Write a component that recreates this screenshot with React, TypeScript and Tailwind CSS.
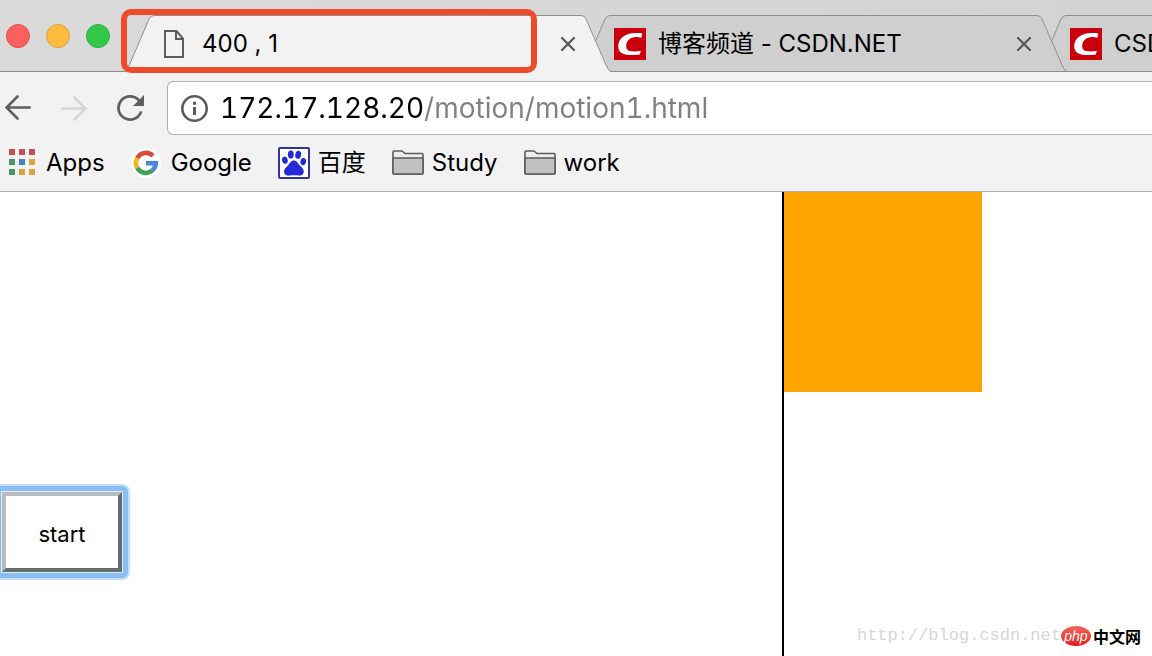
import React from "react";
import clsx from "clsx";

interface Tab {
  title: string;
  favicon: React.ReactNode;
  active?: boolean;
  layer: string;
}

interface Bookmark {
  label: string;
  icon: React.ReactNode;
}

const PageIcon = () => (
  <svg width="20" height="28" viewBox="0 0 20 28" fill="none" stroke="#5c5c5c" strokeWidth="2">
    <path d="M1 1H12.5L19 8.5V27H1Z" />
    <path d="M12 1V9H19" />
  </svg>
);

const CsdnIcon = () => (
  <svg width="32" height="32" viewBox="0 0 32 32">
    <rect width="32" height="32" fill="#c9000b" />
    <path
      fill="#fff"
      d="M28.3 5.3C24.5 4.8 21 4.8 18 5.2C10 6.2 4.3 11 4.2 18C4.2 24 8.2 26.7 15 27C19 27.2 22.5 27 25.8 26.5L26.8 22.7C23.5 23.4 20.5 23.6 17.5 23.3C13.6 22.9 12 21 12.2 17.8C12.5 12.6 16 9.6 20.6 9.2C23 9 25 9.1 27.4 9.7Z"
    />
  </svg>
);

const CloseIcon = () => (
  <svg width="16" height="16" viewBox="0 0 16 16" stroke="#555" strokeWidth="2.2" strokeLinecap="round">
    <path d="M2 2L14 14M14 2L2 14" />
  </svg>
);

const ArrowIcon = ({ flip, color }: { flip?: boolean; color: string }) => (
  <svg
    width="26"
    height="26"
    viewBox="0 0 26 26"
    fill="none"
    stroke={color}
    strokeWidth="2.6"
    strokeLinecap="round"
    className={clsx(flip && "rotate-180")}
  >
    <path d="M24.7 12.5H2M12.5 1.5L1.6 12.5L12.5 23.5" />
  </svg>
);

const ReloadIcon = () => (
  <svg width="27" height="26" viewBox="0 0 27 26" fill="none">
    <path d="M23.8 17.4A11.6 11.6 0 1 1 21.6 5" stroke="#5f5f5f" strokeWidth="2.7" strokeLinecap="round" />
    <path d="M27 0V11H16Z" fill="#5f5f5f" />
  </svg>
);

const InfoIcon = () => (
  <svg width="28" height="28" viewBox="0 0 28 28" fill="none">
    <circle cx="14.5" cy="14.5" r="12.2" stroke="#5c5c5c" strokeWidth="2.6" />
    <path d="M14.5 13V21M14.5 7.7V10.7" stroke="#5c5c5c" strokeWidth="3" />
  </svg>
);

const appColors = [
  "#c44f54",
  "#c44f54",
  "#c44f54",
  "#4a9466",
  "#3f86cf",
  "#d9a441",
  "#4a9466",
  "#d9a441",
  "#d9a441",
];

const AppsIcon = () => (
  <svg width="32" height="32" viewBox="0 0 32 32">
    {appColors.map((color, i) => (
      <rect key={i} x={3 + (i % 3) * 10} y={2 + Math.floor(i / 3) * 10} width="6" height="6" fill={color} />
    ))}
  </svg>
);

const GoogleIcon = () => (
  <svg width="32" height="32" viewBox="0 0 32 32" fill="none">
    <circle cx="15" cy="16" r="15" fill="#fff" />
    <g strokeWidth="4.6" transform="translate(-1)">
      <path d="M7.2 11.2A10 10 0 0 1 23 8.8" stroke="#d9483b" />
      <path d="M7.2 20.8A10 10 0 0 1 7.2 11.2" stroke="#f3b61f" />
      <path d="M22.4 23.6A10 10 0 0 1 7.2 20.8" stroke="#3da457" />
      <path d="M16 16.2H25.8A10 10 0 0 1 22.2 23.6" stroke="#4a86dc" />
    </g>
  </svg>
);

const BaiduIcon = () => (
  <svg width="32" height="32" viewBox="0 0 32 32">
    <rect x="1" y="1" width="30" height="30" rx="1" fill="#fff" stroke="#34349a" strokeWidth="2" />
    <g fill="#2529d8">
      <ellipse cx="12.8" cy="7.4" rx="2.9" ry="4" />
      <ellipse cx="20.2" cy="7.8" rx="2.9" ry="4" transform="rotate(12 20.2 7.8)" />
      <ellipse cx="6.9" cy="13.2" rx="2.8" ry="3.6" transform="rotate(-14 6.9 13.2)" />
      <ellipse cx="25.2" cy="14.6" rx="2.8" ry="3.6" transform="rotate(10 25.2 14.6)" />
      <path d="M15.8 13.6C18.6 13.6 19.6 16 21.4 18C23.4 20 25.8 21.6 25.8 24.6C25.8 27.4 23.6 29 20.8 28.6C17.6 28.1 14.4 28.1 11.4 28.6C8.2 29.1 6 27.4 6 24.6C6 21.6 8.4 20.2 10.2 18.2C12 16 13 13.6 15.8 13.6Z" />
    </g>
  </svg>
);

const FolderIcon = () => (
  <svg width="32" height="32" viewBox="0 0 32 32" stroke="#5c5c5c" strokeWidth="1.6" strokeLinejoin="round">
    <path d="M1 26V5Q1 4 2 4H10L13 6.5H30Q31 6.5 31 7.5V26Q31 27 30 27H2Q1 27 1 26Z" fill="#eee" />
    <path d="M1 11H31V26Q31 27 30 27H2Q1 27 1 26Z" fill="#c2c2c2" />
  </svg>
);

const tabs: Tab[] = [
  { title: "400 , 1", favicon: <PageIcon />, active: true, layer: "z-20" },
  { title: "博客频道 - CSDN.NET", favicon: <CsdnIcon />, layer: "z-10" },
  { title: "CSDN.NET", favicon: <CsdnIcon />, layer: "z-0" },
];

const bookmarks: Bookmark[] = [
  { label: "Apps", icon: <AppsIcon /> },
  { label: "Google", icon: <GoogleIcon /> },
  { label: "百度", icon: <BaiduIcon /> },
  { label: "Study", icon: <FolderIcon /> },
  { label: "work", icon: <FolderIcon /> },
];

const BrowserTab = ({ title, favicon, active, layer }: Tab) => (
  <div className={clsx("relative -mr-[30px] h-[57px] w-[486px] shrink-0", layer)}>
    <svg className="absolute inset-0" width="486" height="57" viewBox="0 0 486 57">
      <path
        d="M0 57Q2.5 55 4 51L24 4Q25.5 .5 29 .5H456Q459.5 .5 461 4L481 50Q483.5 56 486 57Z"
        fill={active ? "#f2f2f2" : "#cfcfcf"}
      />
      <path
        d="M0 56.5Q2.5 55 4 51L24 4Q25.5 .5 29 .5H456Q459.5 .5 461 4L481 50Q483.5 56 486 56.5"
        fill="none"
        stroke="#8e8e8e"
      />
      {!active && <path d="M0 56.5H486" stroke="#8e8e8e" />}
    </svg>
    <div className="relative flex h-full items-center pr-[35px] pl-[33px]">
      <button className="flex min-w-0 flex-1 items-center gap-3 text-left">
        <span className="flex w-8 shrink-0 justify-center">{favicon}</span>
        <span className="truncate">{title}</span>
      </button>
      <button aria-label={`Close ${title}`}>
        <CloseIcon />
      </button>
    </div>
  </div>
);

const TabStrip = () => (
  <div className="flex items-end overflow-hidden bg-linear-to-r from-[#dadada] to-[#d3d3d3] pt-[15px] shadow-[inset_0_-1px_0_#8e8e8e]">
    <div className="flex h-[57px] shrink-0 items-start gap-4 pt-[9px] pr-[15px] pl-1.5">
      <button aria-label="Close window" className="h-6 w-6 rounded-full border border-[#dd504c] bg-[#fc605c]" />
      <button aria-label="Minimize window" className="h-6 w-6 rounded-full border border-[#dba038] bg-[#fdbc40]" />
      <button aria-label="Zoom window" className="h-6 w-6 rounded-full border border-[#2eac40] bg-[#34c84a]" />
    </div>
    {tabs.map((tab) => (
      <BrowserTab key={tab.title} {...tab} />
    ))}
  </div>
);

const Toolbar = () => (
  <div className="flex items-center pt-[9px] pl-[5px]">
    <div className="flex shrink-0 items-center gap-[30px]">
      <button aria-label="Back">
        <ArrowIcon color="#5f5f5f" />
      </button>
      <button aria-label="Forward" disabled>
        <ArrowIcon color="#d6d6d6" flip />
      </button>
      <button aria-label="Reload">
        <ReloadIcon />
      </button>
    </div>
    <div className="ml-[23px] flex h-[54px] min-w-0 flex-1 items-center gap-3 rounded-l-md border border-r-0 border-[#b0b0b0] bg-white pl-3">
      <InfoIcon />
      {/* host is black, the path after it grey */}
      <input
        type="text"
        aria-label="Address"
        defaultValue="172.17.128.20/motion/motion1.html"
        className="min-w-0 flex-1 bg-linear-[to_right,#000_204px,#808080_204px] bg-clip-text text-[28px] text-transparent tabular-nums caret-black outline-none"
      />
    </div>
  </div>
);

const BookmarksBar = () => (
  <nav className="flex h-[57px] items-center gap-[26px] overflow-hidden border-b border-[#b0b0b0] pl-1.5">
    {bookmarks.map(({ label, icon }) => (
      <a key={label} href="#" className="flex shrink-0 items-center gap-2">
        {icon}
        <span>{label}</span>
      </a>
    ))}
  </nav>
);

const Watermark = () => (
  <div className="absolute right-[11px] bottom-2 flex items-center">
    <span className="font-['Liberation_Mono',monospace] text-[17px] leading-6 text-[#d6d6d6]">
      http://blog.csdn.net
    </span>
    <span className="flex h-5 w-[30px] items-center justify-center rounded-[50%] bg-linear-to-b from-[#f4645c] to-[#e60f14] font-['Liberation_Sans',sans-serif] text-[14px] leading-4 text-white italic">
      php
    </span>
    <span className="pl-0.5 font-['Noto_Sans_CJK_SC',sans-serif] text-[16px] leading-6 font-bold">中文网</span>
  </div>
);

const App = () => {
  return (
    <div className="relative flex min-h-screen flex-col overflow-hidden bg-white font-['Inter','Noto_Sans_CJK_SC',sans-serif] text-[24px] leading-8 text-black">
      {/* BROWSER CHROME */}
      <header className="bg-[#f2f2f2]">
        <TabStrip />
        <Toolbar />
        <BookmarksBar />
      </header>

      {/* HIGHLIGHT AROUND THE TAB TITLE */}
      <div className="pointer-events-none absolute top-[9px] left-[121px] z-30 h-16 w-[416px] rounded-[10px] border-6 border-[#ed4b2a]" />

      {/* PAGE */}
      <main className="flex flex-1">
        <div className="w-[782px] shrink-0 pt-[292px]">
          {/* focus ring, its left side runs off the page */}
          <div className="w-fit rounded-r-lg border-y-2 border-r-2 border-[#c6e0f9] bg-[#8abdf1] py-1.5 pr-1.5 pl-0.5">
            <button className="block h-20 w-[120px] border-4 border-t-[#b9bcbf] border-r-[#656d73] border-b-[#656d73] border-l-[#b9bcbf] bg-white pt-1 text-[22px] shadow-[0_0_0_1px_#d9ebfc]">
              start
            </button>
          </div>
        </div>
        <div className="flex-1 border-l-2 border-black">
          <div className="h-[200px] w-[198px] bg-[#ffa500]" />
        </div>
      </main>
      <Watermark />
    </div>
  );
};

export default App;
